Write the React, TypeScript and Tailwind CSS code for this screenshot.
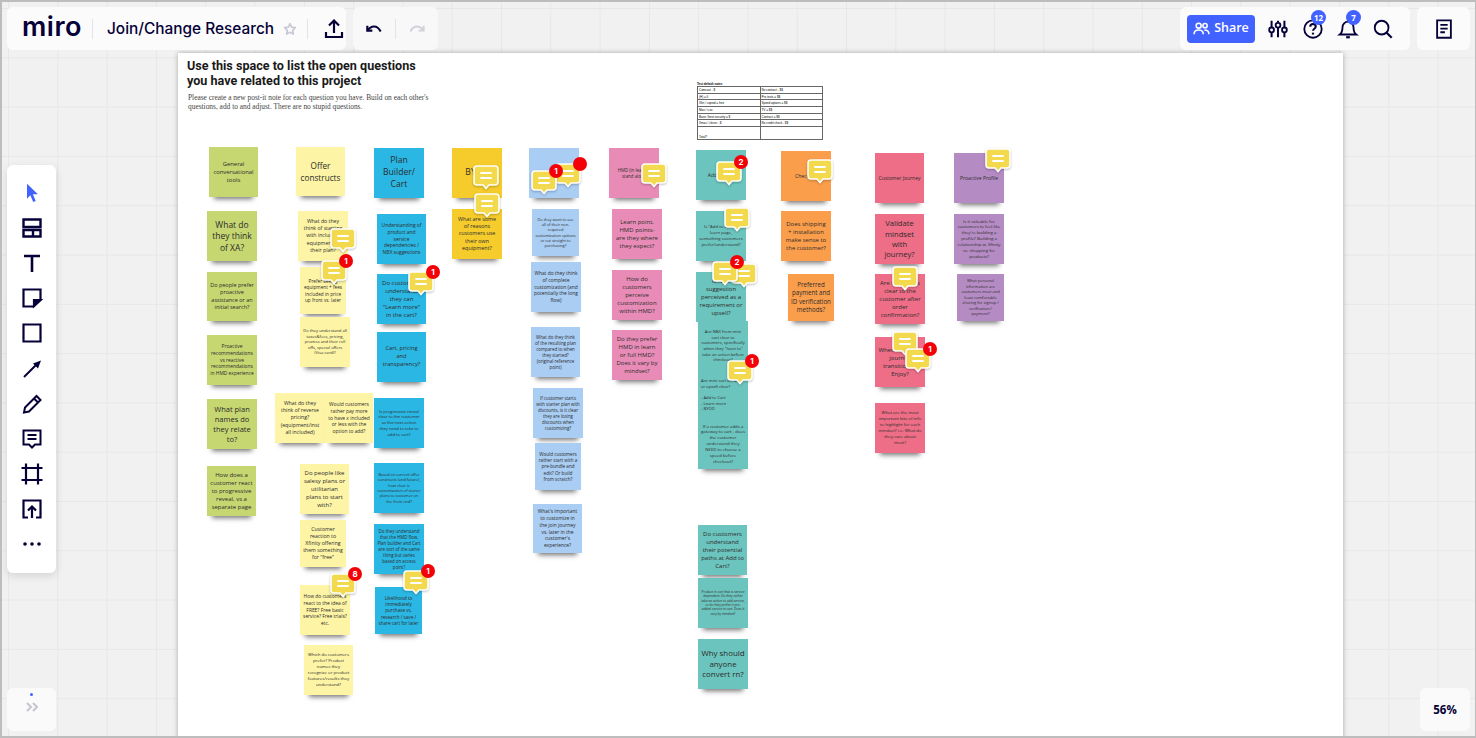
import type { ReactNode } from 'react';

const ink = '#050038';

const colors = {
  green: 'bg-[#c6d772]',
  yellow: 'bg-[#fdf4a6]',
  blue: 'bg-[#2bb7e3]',
  gold: 'bg-[#f5cc2b]',
  sky: 'bg-[#a9cdf3]',
  pink: 'bg-[#e88cb7]',
  teal: 'bg-[#6cc4be]',
  orange: 'bg-[#fb9e4b]',
  rose: 'bg-[#ee6e87]',
  purple: 'bg-[#b58bc4]',
};

type Note = [number, number, number, number, keyof typeof colors, number, string];

const notes: Note[] = [
  [209, 147, 49, 50, 'green', 5.9, 'General conversational tools'],
  [207, 211, 50, 50, 'green', 8.5, 'What do they think of XA?'],
  [207, 272, 50, 49, 'green', 5.5, 'Do people prefer proactive assistance or an initial search?'],
  [207, 335, 50, 50, 'green', 4.9, 'Proactive recommendations vs reactive recommendations in HMD experience'],
  [207, 399, 50, 50, 'green', 7.5, 'What plan names do they relate to?'],
  [207, 466, 49, 50, 'green', 6, 'How does a customer react to progressive reveal, vs a separate page'],

  [296, 147, 49, 49, 'yellow', 8.2, 'Offer constructs'],
  [298, 211, 50, 50, 'yellow', 5.2, 'What do they think of starting with including equipment in their plan?'],
  [300, 267, 46, 47, 'yellow', 4.7, 'Prefer seeing equipment + fees included in price up front vs. later'],
  [300, 317, 50, 50, 'yellow', 4.1, 'Do they understand all taxes&fees, pricing, promos and their roll offs, special offers (Visa card)?'],
  [275, 393, 50, 50, 'yellow', 5.2, 'What do they think of reverse pricing? (equipment/inst all included)'],
  [325, 393, 48, 50, 'yellow', 4.9, 'Would customers rather pay more to have x included or less with the option to add?'],
  [300, 464, 49, 50, 'yellow', 6, 'Do people like salesy plans or utilitarian plans to start with?'],
  [300, 520, 46, 47, 'yellow', 5.2, 'Customer reaction to Xfinity offering them something for "free"'],
  [300, 585, 50, 50, 'yellow', 4.9, 'How do customers react to the idea of FREE? Free basic service? Free trials? etc.'],
  [304, 645, 49, 50, 'yellow', 4.3, 'Which do customers prefer? Product names they recognize or product features/results they understand?'],

  [374, 148, 50, 50, 'blue', 8.6, 'Plan Builder/ Cart'],
  [377, 214, 49, 50, 'blue', 4.9, 'Understanding of product and service dependencies / NBX suggestions'],
  [377, 274, 49, 50, 'blue', 6, 'Do customers understand they can "Learn more" in the cart?'],
  [377, 332, 49, 50, 'blue', 5.7, 'Cart, pricing and transparency?'],
  [374, 398, 50, 50, 'blue', 4.2, 'Is progressive reveal clear to the customer as the next action they need to take to add to cart?'],
  [374, 463, 50, 50, 'blue', 3.9, 'Based on current offer constructs (and future), how clear is customization of starter plans to customer on the front end?'],
  [374, 524, 50, 50, 'blue', 4.4, 'Do they understand that the HMD flow, Plan builder and Cart are sort of the same thing but varies based on access point?'],
  [375, 587, 47, 47, 'blue', 4.6, 'Likelihood to immediately purchase vs. research / save / share cart for later'],

  [452, 148, 50, 50, 'gold', 8.6, 'BYOD'],
  [452, 209, 50, 50, 'gold', 5.4, 'What are some of reasons customers use their own equipment?'],

  [529, 148, 50, 50, 'sky', 5, 'Join'],
  [532, 209, 47, 47, 'sky', 3.9, 'Do they want to see all of their non-required customization options or cut straight to purchasing?'],
  [531, 262, 50, 50, 'sky', 4.9, 'What do they think of complete customization (and potentially the long flow)'],
  [531, 327, 49, 50, 'sky', 4.4, 'What do they think of the resulting plan compared to when they started? (original reference point)'],
  [533, 388, 50, 50, 'sky', 4.4, 'If customer starts with starter plan with discounts, is it clear they are losing discounts when customizing?'],
  [535, 443, 46, 47, 'sky', 4.6, 'Would customers rather start with a pre-bundle and edit? Or build from scratch?'],
  [533, 504, 49, 49, 'sky', 4.9, "What's important to customize in the join journey vs. later in the customer's experience?"],

  [609, 148, 50, 50, 'pink', 4.4, 'HMD (in learn & stand alone'],
  [612, 209, 50, 50, 'pink', 6, 'Learn point, HMD points- are they where they expect?'],
  [612, 270, 50, 50, 'pink', 6, 'How do customers perceive customization within HMD?'],
  [612, 330, 50, 50, 'pink', 6, 'Do they prefer HMD in learn or full HMD? Does it vary by mindset?'],

  [696, 150, 50, 50, 'teal', 5, 'Add to Cart'],
  [696, 211, 50, 50, 'teal', 4.3, 'Is "Add to Cart" a learn page, something customers prefer/understand?'],
  [696, 272, 50, 50, 'teal', 6, 'Is NBX suggestion perceived as a requirement or upsell?'],
  [698, 321, 50, 50, 'teal', 4.2, 'Are NBX from mini cart clear to customers, specifically when they "have to" take an action before checkout?'],
  [698, 370, 50, 50, 'teal', 4.2, 'Are mini cart on NBX or upsell clear?'],
  [698, 419, 50, 50, 'teal', 4.3, 'If a customer adds a gateway to cart - does the customer understand they NEED to choose a speed before checkout?'],
  [698, 525, 49, 50, 'teal', 6, 'Do customers understand their potential paths at Add to Cart?'],
  [698, 578, 50, 50, 'teal', 3.2, 'Product in cart that is service dependent: Do they rather take an action to add service, or do they prefer it pre-added service in cart. Does it vary by mindset?'],
  [698, 639, 50, 50, 'teal', 7.9, 'Why should anyone convert rn?'],

  [781, 151, 50, 50, 'orange', 5, 'Checkout'],
  [781, 211, 50, 50, 'orange', 6, 'Does shipping + installation make sense to the customer?'],
  [788, 274, 46, 47, 'orange', 6.2, 'Preferred payment and ID verification methods?'],

  [875, 153, 49, 50, 'rose', 5, 'Customer Journey'],
  [875, 214, 49, 50, 'rose', 7.6, 'Validate mindset with journey?'],
  [875, 274, 50, 50, 'rose', 6, 'Are next steps clear to the customer after order confirmation?'],
  [875, 337, 50, 50, 'rose', 6, 'When does join journey transition to Enjoy?'],
  [875, 403, 50, 50, 'rose', 4.3, 'What are the most important bits of info to highlight for each mindset? i.e. What do they care about most?'],

  [954, 153, 50, 50, 'purple', 5, 'Proactive Profile'],
  [954, 214, 50, 50, 'purple', 4.3, "Is it valuable for customers to feel like they're building a profile? Building a relationship w. Xfinity vs. shopping for products?"],
  [957, 274, 47, 47, 'purple', 4, 'What personal information are customers most and least comfortable sharing for signup / verification / payment?'],
];

const comments: [number, number, string?][] = [
  [332, 230],
  [323, 262, '1'],
  [410, 273, '1'],
  [332, 575, '8'],
  [405, 572, '1'],
  [475, 167],
  [476, 195],
  [557, 165, ' '],
  [533, 172, '1'],
  [643, 165],
  [718, 163, '2'],
  [809, 161],
  [726, 209],
  [733, 265],
  [714, 263, '2'],
  [729, 362, '1'],
  [894, 333],
  [907, 350, '1'],
  [894, 268],
  [987, 150],
];

const tableRows = [
  ['Comcast - $', 'No contract - $$'],
  ['(H) = 0', 'Pre-tests = $$'],
  ['Xfin / copied = free', 'Speed options = $$'],
  ['Max / x xx', 'TV = $$'],
  ['Base / best security = $', 'Contract = $$'],
  ['Xmas / clever - $', 'No credit check - $$'],
];

function Icon({ children, size = 24, color = ink, sw = 2 }: { children: ReactNode; size?: number; color?: string; sw?: number }) {
  return (
    <svg width={size} height={size} viewBox="0 0 24 24" fill="none" stroke={color} strokeWidth={sw}>
      {children}
    </svg>
  );
}

function Tool({ children }: { children: ReactNode }) {
  return <div className="h-[35.2px] flex items-center justify-center">{children}</div>;
}

function Bubble({ x, y, badge }: { x: number; y: number; badge?: string }) {
  return (
    <div className="absolute w-[22px] h-[18px]" style={{ left: x, top: y }}>
      <svg className="absolute -left-[2px] -top-[2px] drop-shadow-[0_1px_1px_rgba(0,0,0,0.25)]" width="26" height="26" viewBox="0 0 26 26">
        <path
          d="M4 1h18a3 3 0 0 1 3 3v13a3 3 0 0 1-3 3h-6l-3 3.5L10 20H4a3 3 0 0 1-3-3V4a3 3 0 0 1 3-3z"
          fill="#f2d94e"
          stroke="#fff"
          strokeWidth="1.6"
        />
        <path d="M8 8h10M8 13h10" stroke="#fff" strokeWidth="1.8" strokeLinecap="round" />
      </svg>
      {badge && (
        <span className="absolute left-[16px] -top-[8px] w-[14px] h-[14px] rounded-full bg-[#f40009] text-white text-[8px] font-bold leading-[14px] text-center font-['Inter',sans-serif]">
          {badge}
        </span>
      )}
    </div>
  );
}

export default function App() {
  return (
    <div className="relative h-[738px] overflow-hidden border-2 border-[#bdbdbd] border-r-[1px] bg-[#f1f1f1] bg-[linear-gradient(to_right,#e7e7e7_1px,transparent_1px),linear-gradient(to_bottom,#e7e7e7_1px,transparent_1px)] bg-size-[49.3px_49.3px] bg-position-[6px_6px] font-['Open_Sans',sans-serif]">
      {/* board */}
      <div className="absolute left-[176px] top-[51px] w-[1165px] h-[700px] bg-white shadow-[0_0_5px_rgba(0,0,0,0.3)]">
        <h1 className="absolute left-[9px] top-[6px] text-[12.6px] leading-[14.6px] font-bold text-[#1a1a1a] font-['Roboto',sans-serif]">
          Use this space to list the open questions
          <br />
          you have related to this project
        </h1>
        <p className="absolute left-[10px] top-[41px] w-[260px] text-[7.4px] leading-[8.6px] text-[#444] font-['Liberation_Serif',serif]">
          Please create a new post-it note for each question you have. Build on each other's questions, add to and adjust. There are no stupid questions.
        </p>
      </div>

      {/* canvas offset is shifted by the 2px frame */}
      <div className="absolute -left-[0px] -top-[0px] translate-x-[-2px] translate-y-[-2px]">
        <div className="absolute left-[697px] top-[82px] w-[126px] text-[3px] leading-[4px] font-bold text-black font-['Liberation_Sans',sans-serif]">
          <div>Test default notes</div>
          <table className="w-full h-[53px] border-collapse font-normal table-fixed">
            <tbody>
              {tableRows.map((r) => (
                <tr key={r[0]} className="h-[6.7px]">
                  <td className="border border-[#666] pl-[1px] align-middle">{r[0]}</td>
                  <td className="border border-[#666] pl-[1px] align-middle">{r[1]}</td>
                </tr>
              ))}
              <tr className="h-[13px]">
                <td className="border border-[#666] pl-[1px] align-bottom">Total?</td>
                <td className="border border-[#666]"></td>
              </tr>
            </tbody>
          </table>
        </div>

        {notes.map(([x, y, w, h, c, fs, text]) => (
          <div
            key={text}
            className={`absolute flex items-center justify-center p-[3px] text-center leading-[1.36] text-[#2c2c2c] shadow-[0_7px_5px_-5px_rgba(0,0,0,0.55)] ${colors[c]}`}
            style={{ left: x, top: y, width: w, height: h, fontSize: fs }}
          >
            {text === 'Are mini cart on NBX or upsell clear?' ? (
              <div className="text-left w-full">
                {text}
                <br />
                <br />- Add to Cart
                <br />- Learn more
                <br />- BYOD
              </div>
            ) : (
              <span>{text}</span>
            )}
          </div>
        ))}

        {comments.map(([x, y, b]) => (
          <Bubble key={`${x}-${y}`} x={x} y={y} badge={b} />
        ))}
      </div>

      {/* top bar */}
      <div className="absolute inset-x-0 top-[5px] pl-[5px] pr-[5px] flex items-start text-[#050038]">
        <div className="h-[43px] w-[339px] bg-[#fbfbfb] rounded-md flex items-center">
          <span className="ml-[15px] w-[55px] text-[27px] leading-none font-semibold tracking-[0.5px] font-['Inter',sans-serif] pb-[4px]">miro</span>
          <div className="ml-[15px] w-px h-[20px] bg-[#e3e3e8]" />
          <span className="ml-[14px] text-[15.4px] font-medium whitespace-nowrap font-['Inter',sans-serif]">Join/Change Research</span>
          <svg className="ml-[9px]" width="14" height="14" viewBox="0 0 24 24" fill="none" stroke="#c9c9d6" strokeWidth="3" strokeLinejoin="round">
            <path d="M12 3l2.8 5.9 6.4.9-4.6 4.5 1.1 6.4L12 17.7l-5.7 3 1.1-6.4-4.6-4.5 6.4-.9z" />
          </svg>
          <div className="ml-[10px] w-px h-[20px] bg-[#e3e3e8]" />
          <div className="ml-[14px]">
            <Icon>
              <path d="M12 16V4M7 8.5L12 3.5l5 5M4 15v5h16v-5" strokeWidth="2.2" />
            </Icon>
          </div>
        </div>
        <div className="ml-[7px] h-[43px] w-[85px] bg-[#f8f8f8] rounded-md flex items-center">
          <div className="ml-[11px]">
            <Icon size={20} sw={2.6}>
              <path d="M4 8v6h6" />
              <path d="M4 14c2.5-3.5 5-5 8-5s6 2 8 6" />
            </Icon>
          </div>
          <div className="ml-[11px] w-px h-[20px] bg-[#e3e3e8]" />
          <div className="ml-[11px]">
            <Icon size={20} sw={2.2} color="#d0d0da">
              <path d="M20 8v6h-6" />
              <path d="M20 14c-2.5-3.5-5-5-8-5s-6 2-8 6" />
            </Icon>
          </div>
        </div>

        <div className="ml-auto h-[43px] w-[230px] bg-[#fbfbfb] rounded-md flex items-center">
          <div className="ml-[7px] w-[68px] h-[28px] rounded-[4px] bg-[#4262ff] flex items-center justify-center gap-[4px] text-white text-[12.5px] font-semibold font-['Open_Sans',sans-serif]">
            <svg width="17" height="17" viewBox="0 0 24 24" fill="none" stroke="#fff" strokeWidth="2.2">
              <circle cx="8" cy="8" r="3.5" />
              <circle cx="17" cy="8" r="3" />
              <path d="M1.5 20c0-4 3-6 6.5-6s6.5 2 6.5 6M16 14c3.5 0 6.5 2 6.5 6" />
            </svg>
            Share
          </div>
          <div className="ml-[12px]">
            <Icon size={22}>
              <path d="M5 3v7M5 16v5M12 3v2M12 11v10M19 3v7M19 16v5" strokeWidth="2.2" />
              <circle cx="5" cy="13" r="2.6" />
              <circle cx="12" cy="8" r="2.6" />
              <circle cx="19" cy="13" r="2.6" />
            </Icon>
          </div>
          <div className="relative ml-[13px]">
            <Icon size={22}>
              <circle cx="12" cy="12" r="9.5" />
              <path d="M9 9.5c0-1.8 1.4-3 3-3s3 1.2 3 2.8c0 2.4-3 2.4-3 4.7" strokeWidth="2.2" />
              <path d="M12 16v2" strokeWidth="2.4" />
            </Icon>
            <span className="absolute left-[9px] -top-[8px] w-[15px] h-[15px] rounded-full bg-[#4262ff] text-white text-[8px] font-bold leading-[15px] text-center">12</span>
          </div>
          <div className="relative ml-[13px]">
            <Icon size={22}>
              <path d="M6 10a6 6 0 0 1 12 0c0 5 1 6.5 3 8H3c2-1.5 3-3 3-8z" />
              <path d="M10 21h4" strokeWidth="2.4" />
            </Icon>
            <span className="absolute left-[9px] -top-[8px] w-[15px] h-[15px] rounded-full bg-[#4262ff] text-white text-[8px] font-bold leading-[15px] text-center">7</span>
          </div>
          <div className="ml-[13px]">
            <Icon size={22}>
              <circle cx="10.5" cy="10.5" r="7.5" />
              <path d="M16 16l5.5 5.5" strokeWidth="2.4" />
            </Icon>
          </div>
        </div>
        <div className="ml-[7px] h-[43px] w-[53px] bg-[#fbfbfb] rounded-md flex items-center justify-center">
          <Icon size={22}>
            <path d="M4.5 2.5h15v19h-15z" />
            <path d="M8 7.5h8M8 11.5h8M8 15.5h5" />
          </Icon>
        </div>
      </div>

      {/* left toolbar */}
      <div className="absolute left-[5px] top-[163px] w-[49px] h-[408px] pt-[10px] bg-white rounded-md shadow-[0_3px_8px_rgba(0,0,0,0.12)] flex flex-col">
        <Tool>
          <svg width="20" height="20" viewBox="0 0 24 24" fill="#4262ff">
            <path d="M6 1l13 12.5h-6l3.5 8-3 1.3-3.5-8L6 19z" />
          </svg>
        </Tool>
        <Tool>
          <Icon sw={2.4}>
            <path d="M3.5 3.5h17v7.5h-17zM3.5 14h17v6.5h-17zM13 14v6.5" />
          </Icon>
        </Tool>
        <Tool>
          <Icon sw={2.6}>
            <path d="M4 5h16M12 5v16" />
          </Icon>
        </Tool>
        <Tool>
          <svg width="24" height="24" viewBox="0 0 24 24" fill="none" stroke={ink} strokeWidth="2.2">
            <path d="M20.5 3.5h-17v17h10l7-7z" />
            <path d="M14 20v-6h6.5z" fill={ink} />
          </svg>
        </Tool>
        <Tool>
          <Icon sw={2.2}>
            <path d="M3.5 3.5h17v17h-17z" />
          </Icon>
        </Tool>
        <Tool>
          <svg width="24" height="24" viewBox="0 0 24 24" fill="none" stroke={ink} strokeWidth="2">
            <path d="M4 20L17 7" />
            <path d="M13 6.5l8-3-3 8z" fill={ink} stroke="none" />
          </svg>
        </Tool>
        <Tool>
          <Icon sw={2}>
            <path d="M4 20.5l1-5L16.5 4l4 4L9 19.5zM14 6.5l4 4" />
          </Icon>
        </Tool>
        <Tool>
          <Icon sw={2}>
            <path d="M3.5 3.5h17v14h-5.5L12 20.5 9 17.5H3.5z" />
            <path d="M7.5 8h9M7.5 12h9" />
          </Icon>
        </Tool>
        <Tool>
          <Icon sw={2.2}>
            <path d="M1.5 6h21M1.5 18h21M6 1.5v21M18 1.5v21" />
          </Icon>
        </Tool>
        <Tool>
          <Icon sw={2.2}>
            <path d="M8 3.5H3.5v17H8M16 20.5h4.5v-17h-17M12 21V10M8 13.5l4-4 4 4" />
          </Icon>
        </Tool>
        <Tool>
          <svg width="20" height="6" viewBox="0 0 20 6" fill={ink}>
            <circle cx="3" cy="3" r="1.8" />
            <circle cx="10" cy="3" r="1.8" />
            <circle cx="17" cy="3" r="1.8" />
          </svg>
        </Tool>
      </div>

      {/* bottom left */}
      <div className="absolute left-[5px] top-[686px] w-[49px] h-[43px] bg-[#fafafa] rounded-md flex flex-col items-center pt-[5px]">
        <div className="w-[3px] h-[3px] rounded-full bg-[#4262ff]" />
        <svg className="mt-[6px]" width="12" height="10" viewBox="0 0 12 10" fill="none" stroke="#c5c5d0" strokeWidth="2">
          <path d="M1 1l4 4-4 4M7 1l4 4-4 4" />
        </svg>
      </div>

      {/* zoom */}
      <div className="absolute right-[5px] top-[686px] w-[50px] h-[43px] bg-[#fafafa] rounded-md flex items-center justify-center text-[11.5px] font-bold text-[#050038]">
        56%
      </div>
    </div>
  );
}
